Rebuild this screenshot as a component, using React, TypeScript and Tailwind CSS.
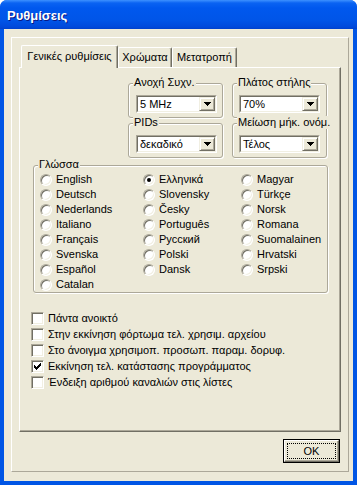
import type { ReactNode } from "react"

const BEIGE = "bg-[#ECE9D8]"

function DropButton() {
  return (
    <div className="w-[16px] h-full bg-[#ECE9D8] border border-t-[#F1EFE2] border-l-[#F1EFE2] border-r-[#716F64] border-b-[#716F64] shadow-[inset_1px_1px_0_#fff,inset_-1px_-1px_0_#ACA899] flex items-center justify-center">
      <svg width="7" height="4" viewBox="0 0 7 4">
        <path d="M0 0h7v1H0z M1 1h5v1H1z M2 2h3v1H2z M3 3h1v1H3z" fill="#000" />
      </svg>
    </div>
  )
}

function Combo({ value }: { value: string }) {
  return (
    <div className="w-[81px] h-[18px] border border-t-[#ACA899] border-l-[#ACA899] border-r-white border-b-white">
      <div className="h-full flex items-center bg-white border border-t-[#716F64] border-l-[#716F64] border-r-[#F1EFE2] border-b-[#F1EFE2]">
        <span className="flex-1 pl-[2px] leading-none">{value}</span>
        <DropButton />
      </div>
    </div>
  )
}

function GroupBox({ label, className, children }: { label: string; className: string; children: ReactNode }) {
  return (
    <div className={`relative border border-[#ACA899] rounded-[3px] shadow-[inset_1px_1px_0_#fff,1px_1px_0_#fff] ${className}`}>
      <span className="absolute left-[4px] -top-[8px] px-[1px] bg-[#ECE9D8] leading-[13px] whitespace-nowrap">{label}</span>
      {children}
    </div>
  )
}

function Radio({ label, checked }: { label: string; checked?: boolean }) {
  return (
    <div className="flex items-center h-[15px]">
      <span className="w-[12px] h-[12px] shrink-0 rounded-full bg-white border border-t-[#ACA899] border-l-[#ACA899] border-r-white border-b-white shadow-[inset_1px_1px_0_#716F64,inset_-1px_-1px_0_#F1EFE2] flex items-center justify-center">
        {checked && <span className="w-[4px] h-[4px] rounded-full bg-black" />}
      </span>
      <span className="ml-[4px] whitespace-nowrap">{label}</span>
    </div>
  )
}

function Check({ label, checked }: { label: string; checked?: boolean }) {
  return (
    <div className="flex items-center h-[16px]">
      <span className="w-[13px] h-[13px] shrink-0 bg-white border border-t-[#ACA899] border-l-[#ACA899] border-r-white border-b-white shadow-[inset_1px_1px_0_#716F64,inset_-1px_-1px_0_#F1EFE2] flex items-center justify-center">
        {checked && (
          <svg width="7" height="7" viewBox="0 0 7 7">
            <path
              d="M6 0h1v1H6z M5 1h2v1H5z M0 2h1v1H0z M4 2h3v1H4z M0 3h2v1H0z M3 3h3v1H3z M0 4h5v1H0z M1 5h3v1H1z M2 6h1v1H2z"
              fill="#000"
            />
          </svg>
        )}
      </span>
      <span className="ml-[4px] whitespace-nowrap">{label}</span>
    </div>
  )
}

const col1 = ["English", "Deutsch", "Nederlands", "Italiano", "Français", "Svenska", "Español", "Catalan"]
const col2 = ["Ελληνικά", "Slovensky", "Česky", "Português", "Русский", "Polski", "Dansk"]
const col3 = ["Magyar", "Türkçe", "Norsk", "Romana", "Suomalainen", "Hrvatski", "Srpski"]

const options = [
  { label: "Πάντα ανοικτό" },
  { label: "Στην εκκίνηση φόρτωμα τελ. χρησιμ. αρχείου" },
  { label: "Στο άνοιγμα χρησιμοπ. προσωπ. παραμ. δορυφ." },
  { label: "Εκκίνηση τελ. κατάστασης προγράμματος", checked: true },
  { label: "Ένδειξη αριθμού καναλιών στις λίστες" },
]

export default function App() {
  return (
    <div className="w-[357px] h-[485px] bg-white font-['Liberation_Sans',Arial,sans-serif] text-[11px] text-black">
      <div className="h-full flex flex-col rounded-t-[7px] bg-[#0055E5] overflow-hidden">
        {/* title bar */}
        <div className="h-[29px] shrink-0 flex items-center pl-[7px] pt-[3px] bg-[linear-gradient(to_bottom,#3D91FF_0px,#0A63F2_3px,#0058EE_8px,#0055E8_20px,#0049DB_27px,#0040CC_29px)]">
          <span className="text-white font-bold text-[13px] [text-shadow:1px_1px_#0A1883]">Ρυθμίσεις</span>
        </div>

        <div className={`flex-1 mx-[4px] mb-[4px] ${BEIGE} pt-[8px] pl-[7px]`}>
          <div className="w-[338px] h-[435px] border border-t-white border-l-white border-r-[#ACA899] border-b-[#ACA899] px-[7px] pt-[7px]">
            {/* tabs */}
            <div className="flex items-end h-[22px]">
              <div className="relative z-10 ml-[2px] w-[97px] h-[23px] -mb-[1px] bg-[#ECE9D8] border-t border-l border-r border-t-white border-l-white border-r-[#716F64] shadow-[inset_-1px_0_0_#ACA899] rounded-t-[2px] flex items-center justify-center pb-[1px]">
                Γενικές ρυθμίσεις
              </div>
              <div className="w-[54px] h-[20px] border-t border-l border-r border-t-white border-l-white border-r-[#716F64] shadow-[inset_-1px_0_0_#ACA899] rounded-t-[2px] flex items-center justify-center">
                Χρώματα
              </div>
              <div className="w-[65px] h-[20px] border-t border-l border-r border-t-white border-l-white border-r-[#716F64] shadow-[inset_-1px_0_0_#ACA899] rounded-t-[2px] flex items-center justify-center">
                Μετατροπή
              </div>
            </div>

            {/* tab page */}
            <div className="h-[365px] border border-t-white border-l-white border-r-[#716F64] border-b-[#716F64] shadow-[inset_-1px_-1px_0_#ACA899]">
              <div className="mt-[15px] ml-[108px] grid grid-cols-[95px_95px] gap-x-[9px] gap-y-[5px]">
                <GroupBox label="Ανοχή Συχν." className="h-[35px] pt-[11px] pl-[7px]">
                  <Combo value="5 MHz" />
                </GroupBox>
                <GroupBox label="Πλάτος στήλης" className="h-[35px] pt-[11px] pl-[6px]">
                  <Combo value="70%" />
                </GroupBox>
                <GroupBox label="PIDs" className="h-[35px] pt-[11px] pl-[7px]">
                  <Combo value="δεκαδικό" />
                </GroupBox>
                <GroupBox label="Μείωση μήκ. ονόμ." className="h-[35px] pt-[11px] pl-[6px]">
                  <Combo value="Τέλος" />
                </GroupBox>
              </div>

              <GroupBox label="Γλώσσα" className="mt-[7px] ml-[13px] w-[295px] h-[128px] pt-[6px] pl-[6px] flex">
                <div className="w-[103px]">
                  {col1.map((l) => (
                    <Radio key={l} label={l} />
                  ))}
                </div>
                <div className="w-[98px]">
                  {col2.map((l) => (
                    <Radio key={l} label={l} checked={l === "Ελληνικά"} />
                  ))}
                </div>
                <div className="flex-1">
                  {col3.map((l) => (
                    <Radio key={l} label={l} />
                  ))}
                </div>
              </GroupBox>

              <div className="mt-[17px] ml-[11px]">
                {options.map((o) => (
                  <Check key={o.label} label={o.label} checked={o.checked} />
                ))}
              </div>
            </div>

            <div className="mt-[7px] flex justify-end mr-[1px]">
              <div className="w-[57px] h-[24px] border border-black">
                <div className="h-full border border-t-white border-l-white border-r-[#716F64] border-b-[#716F64] shadow-[inset_-1px_-1px_0_#ACA899] p-[2px]">
                  <div className="h-full border border-dotted border-black flex items-center justify-center">OK</div>
                </div>
              </div>
            </div>
          </div>
        </div>
      </div>
    </div>
  )
}
